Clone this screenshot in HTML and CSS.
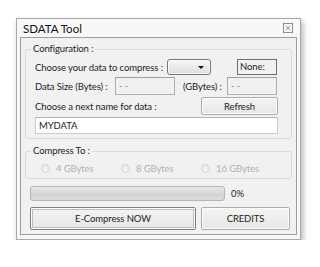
FILE: index.html
```html
<!DOCTYPE html>
<html lang="en">
<head>
    <meta charset="UTF-8">
    <title>SDATA Tool</title>
    <link rel="stylesheet" href="styles.css">
</head>
<body>
    <div class="window">
        <div class="titlebar">
            <span class="title">SDATA Tool</span>
            <span class="close">
                <svg width="10" height="10" viewBox="0 0 10 10">
                    <rect x="0.5" y="0.5" width="9" height="9" fill="#f4f4f4" stroke="#8c8c8c"/>
                    <path d="M3 3 L7 7 M7 3 L3 7" stroke="#9a9a9a" stroke-width="1"/>
                </svg>
            </span>
        </div>

        <div class="client">
            <fieldset class="group config">
                <legend>Configuration :</legend>
                <div class="row row-source">
                    <span class="label label-source">Choose your data to compress :</span>
                    <div class="combo"><span class="combo-arrow"></span></div>
                    <span class="static">None:</span>
                </div>
                <div class="row row-size">
                    <span class="label label-bytes">Data Size (Bytes) :</span>
                    <div class="field field-bytes">- -</div>
                    <span class="label label-gb">(GBytes) :</span>
                    <div class="field field-gb">- -</div>
                </div>
                <div class="row row-name">
                    <span class="label label-name">Choose a next name for data :</span>
                    <div class="btn btn-refresh">Refresh</div>
                </div>
                <div class="row row-input">
                    <div class="field field-name">MYDATA</div>
                </div>
            </fieldset>

            <fieldset class="group compress">
                <legend>Compress To :</legend>
                <div class="radios">
                    <span class="radio"><span class="dot"></span>4 GBytes</span>
                    <span class="radio"><span class="dot"></span>8 GBytes</span>
                    <span class="radio"><span class="dot"></span>16 GBytes</span>
                </div>
            </fieldset>

            <div class="progress-row">
                <div class="progress"></div>
                <span class="percent">0%</span>
            </div>

            <div class="actions">
                <div class="btn btn-main">E-Compress NOW</div>
                <div class="btn btn-credits">CREDITS</div>
            </div>
        </div>
    </div>
</body>
</html>
```

FILE: styles.css
```css
* {
    margin: 0;
    padding: 0;
    box-sizing: border-box;
}

body {
    font-family: Lato, 'Noto Sans', sans-serif;
    font-size: 9.5px;
    letter-spacing: -0.1px;
    color: #1c1c1c;
    background: white;
}

.window {
    margin: 18px 0 0 16px;
    width: 285px;
    height: 222px;
    border: 1px solid #a9a9a9;
    background: #f8f8f8;
    box-shadow: 2px 3px 6px rgba(0, 0, 0, 0.3);
    display: flex;
    flex-direction: column;
}

.titlebar {
    height: 18px;
    display: flex;
    align-items: center;
    justify-content: space-between;
    padding: 0 7px 0 6px;
}

.title {
    font-size: 11.5px;
    letter-spacing: 0;
    color: #111;
}

.close {
    display: flex;
    margin-top: -1px;
}

.client {
    flex: 1;
    margin: 0 3px 4px 3px;
    border: 1px solid #9c9c9c;
    background: #f1f1f1;
    display: flex;
    flex-direction: column;
}

.group {
    margin: 4px 4px 0 4px;
    border: 1px solid #d8d8d8;
    border-radius: 3px;
    padding: 0 13px 4px 9px;
}

.group legend {
    margin-left: -4px;
    padding: 0 2px;
    line-height: 14px;
    height: 14px;
}

.row {
    display: flex;
    align-items: center;
    white-space: nowrap;
}

.row-source {
    margin-top: 3px;
    height: 16px;
}

.row-size,
.row-name,
.row-input {
    margin-top: 2px;
    height: 18px;
}

.row-input {
    height: 17px;
}

.label-source {
    width: 132px;
}

.label-bytes {
    width: 80px;
}

.label-gb {
    width: 44px;
    margin-left: 8px;
}

.label-name {
    flex: 1;
}

.combo {
    width: 44px;
    height: 16px;
    border: 1px solid #777;
    border-radius: 3px;
    background: linear-gradient(#f6f6f6, #dedede);
    box-shadow: inset 0 0 0 1px rgba(255, 255, 255, 0.7);
    position: relative;
}

.combo-arrow {
    position: absolute;
    right: 6px;
    top: 6px;
    border-left: 3px solid transparent;
    border-right: 3px solid transparent;
    border-top: 3px solid #111;
}

.static {
    margin-left: 26px;
    width: 40px;
    height: 16px;
    border: 1px solid #6e6e6e;
    padding-left: 2px;
    line-height: 14px;
}

.field {
    height: 100%;
    border: 1px solid #abadb3;
    border-top-color: #a0a0a0;
    background: #f0f0f0;
    color: #8a8a8a;
    padding-left: 3px;
    line-height: 15px;
}

.field-bytes {
    width: 60px;
}

.field-gb {
    width: 50px;
}

.field-name {
    width: 100%;
    background: white;
    color: #1c1c1c;
    border-color: #c9ccd2;
    border-top-color: #b0b3ba;
}

.btn {
    display: flex;
    align-items: center;
    justify-content: center;
    border: 1px solid #acacac;
    border-radius: 2px;
    background: linear-gradient(#f4f4f4, #e6e6e6);
    box-shadow: inset 0 0 0 1px #fcfcfc;
}

.btn-refresh {
    width: 77px;
    height: 18px;
}

.compress {
    margin-top: 5px;
    padding: 0 4px 3px 15px;
}

.compress legend {
    margin-left: -10px;
}

.radios {
    margin-top: 3px;
    height: 14px;
    display: flex;
    align-items: center;
}

.radio {
    width: 80px;
    display: flex;
    align-items: center;
    gap: 6px;
    color: #b0b0b0;
}

.dot {
    width: 9px;
    height: 9px;
    border-radius: 50%;
    border: 1px solid #d2d2d2;
    background: linear-gradient(#e6e6e6, #f6f6f6);
}

.progress-row {
    margin: 7px 0 0 9px;
    height: 15px;
    display: flex;
    align-items: center;
}

.progress {
    width: 195px;
    height: 15px;
    border: 1px solid #b5b5b5;
    border-radius: 3px;
    background: linear-gradient(#e8e8e8, #d6d6d6 50%, #d0d0d0 51%, #dcdcdc);
}

.percent {
    margin-left: 6px;
}

.actions {
    margin: 6px 0 0 9px;
    display: flex;
    gap: 5px;
}

.btn-main {
    width: 166px;
    height: 23px;
    border-color: #7d7d7d;
    box-shadow: inset 0 0 0 1px #fdfdfd, inset 0 0 0 2px #bdbdbd;
}

.btn-credits {
    width: 89px;
    height: 23px;
}
```
